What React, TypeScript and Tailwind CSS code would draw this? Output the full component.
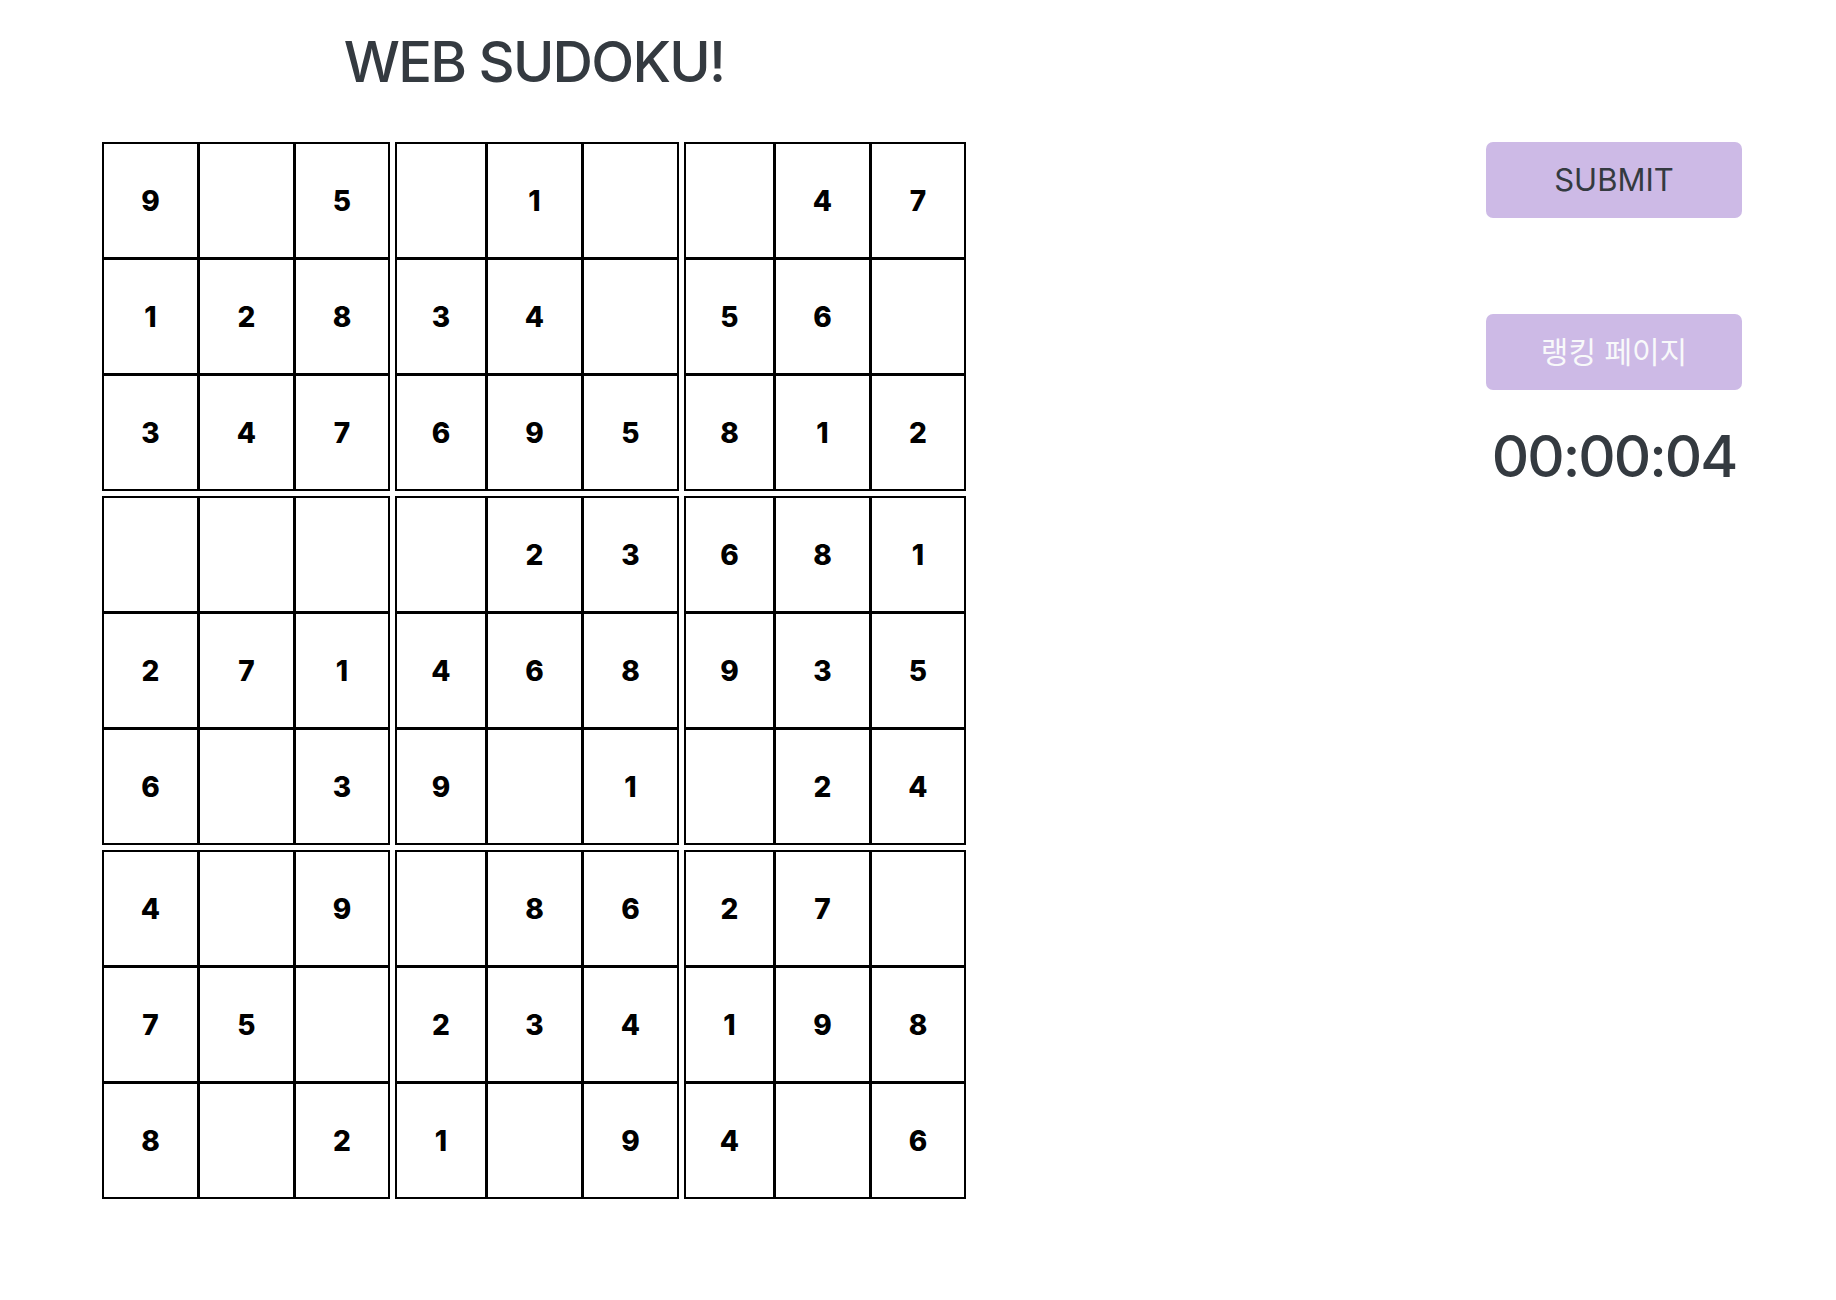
const board: (number | null)[][] = [
  [9, null, 5, null, 1, null, null, 4, 7],
  [1, 2, 8, 3, 4, null, 5, 6, null],
  [3, 4, 7, 6, 9, 5, 8, 1, 2],
  [null, null, null, null, 2, 3, 6, 8, 1],
  [2, 7, 1, 4, 6, 8, 9, 3, 5],
  [6, null, 3, 9, null, 1, null, 2, 4],
  [4, null, 9, null, 8, 6, 2, 7, null],
  [7, 5, null, 2, 3, 4, 1, 9, 8],
  [8, null, 2, 1, null, 9, 4, null, 6],
];

// column widths per box (boxes 2 and 3 start with a narrower cell)
const colWidths = [
  ["w-[93px]", "w-[93px]", "w-[92px]"],
  ["w-[88px]", "w-[93px]", "w-[93px]"],
  ["w-[87px]", "w-[93px]", "w-[92px]"],
];

function Box({ br, bc }: { br: number; bc: number }) {
  const rows = [0, 1, 2].map((r) => board[br * 3 + r].slice(bc * 3, bc * 3 + 3));
  return (
    <div className="flex flex-col gap-[3px] bg-black p-[2px]">
      {rows.map((row, r) => (
        <div key={r} className="flex gap-[3px]">
          {row.map((v, c) => (
            <div
              key={c}
              className={`${colWidths[bc][c]} h-[113px] bg-white flex items-center justify-center text-[28px] font-extrabold text-black`}
            >
              {v ?? ""}
            </div>
          ))}
        </div>
      ))}
    </div>
  );
}

export default function App() {
  return (
    <div className="min-h-screen bg-white flex font-['Inter','Noto_Sans_CJK_KR',sans-serif]">
      <div className="pl-[102px] w-[1000px]">
        <h1 className="w-[864px] text-center text-[56px] font-medium text-[#343a40] leading-none pt-[34px] pb-[52px] tracking-[-1.75px]">
          WEB SUDOKU!
        </h1>
        <div className="flex flex-col gap-[5px]">
          {[0, 1, 2].map((br) => (
            <div key={br} className="flex gap-[5px]">
              {[0, 1, 2].map((bc) => (
                <Box key={bc} br={br} bc={bc} />
              ))}
            </div>
          ))}
        </div>
      </div>
      <div className="flex-1 flex flex-col items-end pr-[94px] pt-[142px]">
        <div className="w-[256px] flex flex-col items-center">
          <button className="w-full h-[76px] rounded-[7px] bg-[#cdbae6] text-[#343a40] text-[31px]">
            SUBMIT
          </button>
          <button className="w-full h-[76px] rounded-[7px] bg-[#cdbae6] text-[#f8f9fa] text-[30px] mt-[96px]">
            랭킹 페이지
          </button>
          <div className="mt-[30px] text-[58px] font-medium text-[#343a40] leading-tight tracking-[-2px]">
            00:00:04
          </div>
        </div>
      </div>
    </div>
  );
}
